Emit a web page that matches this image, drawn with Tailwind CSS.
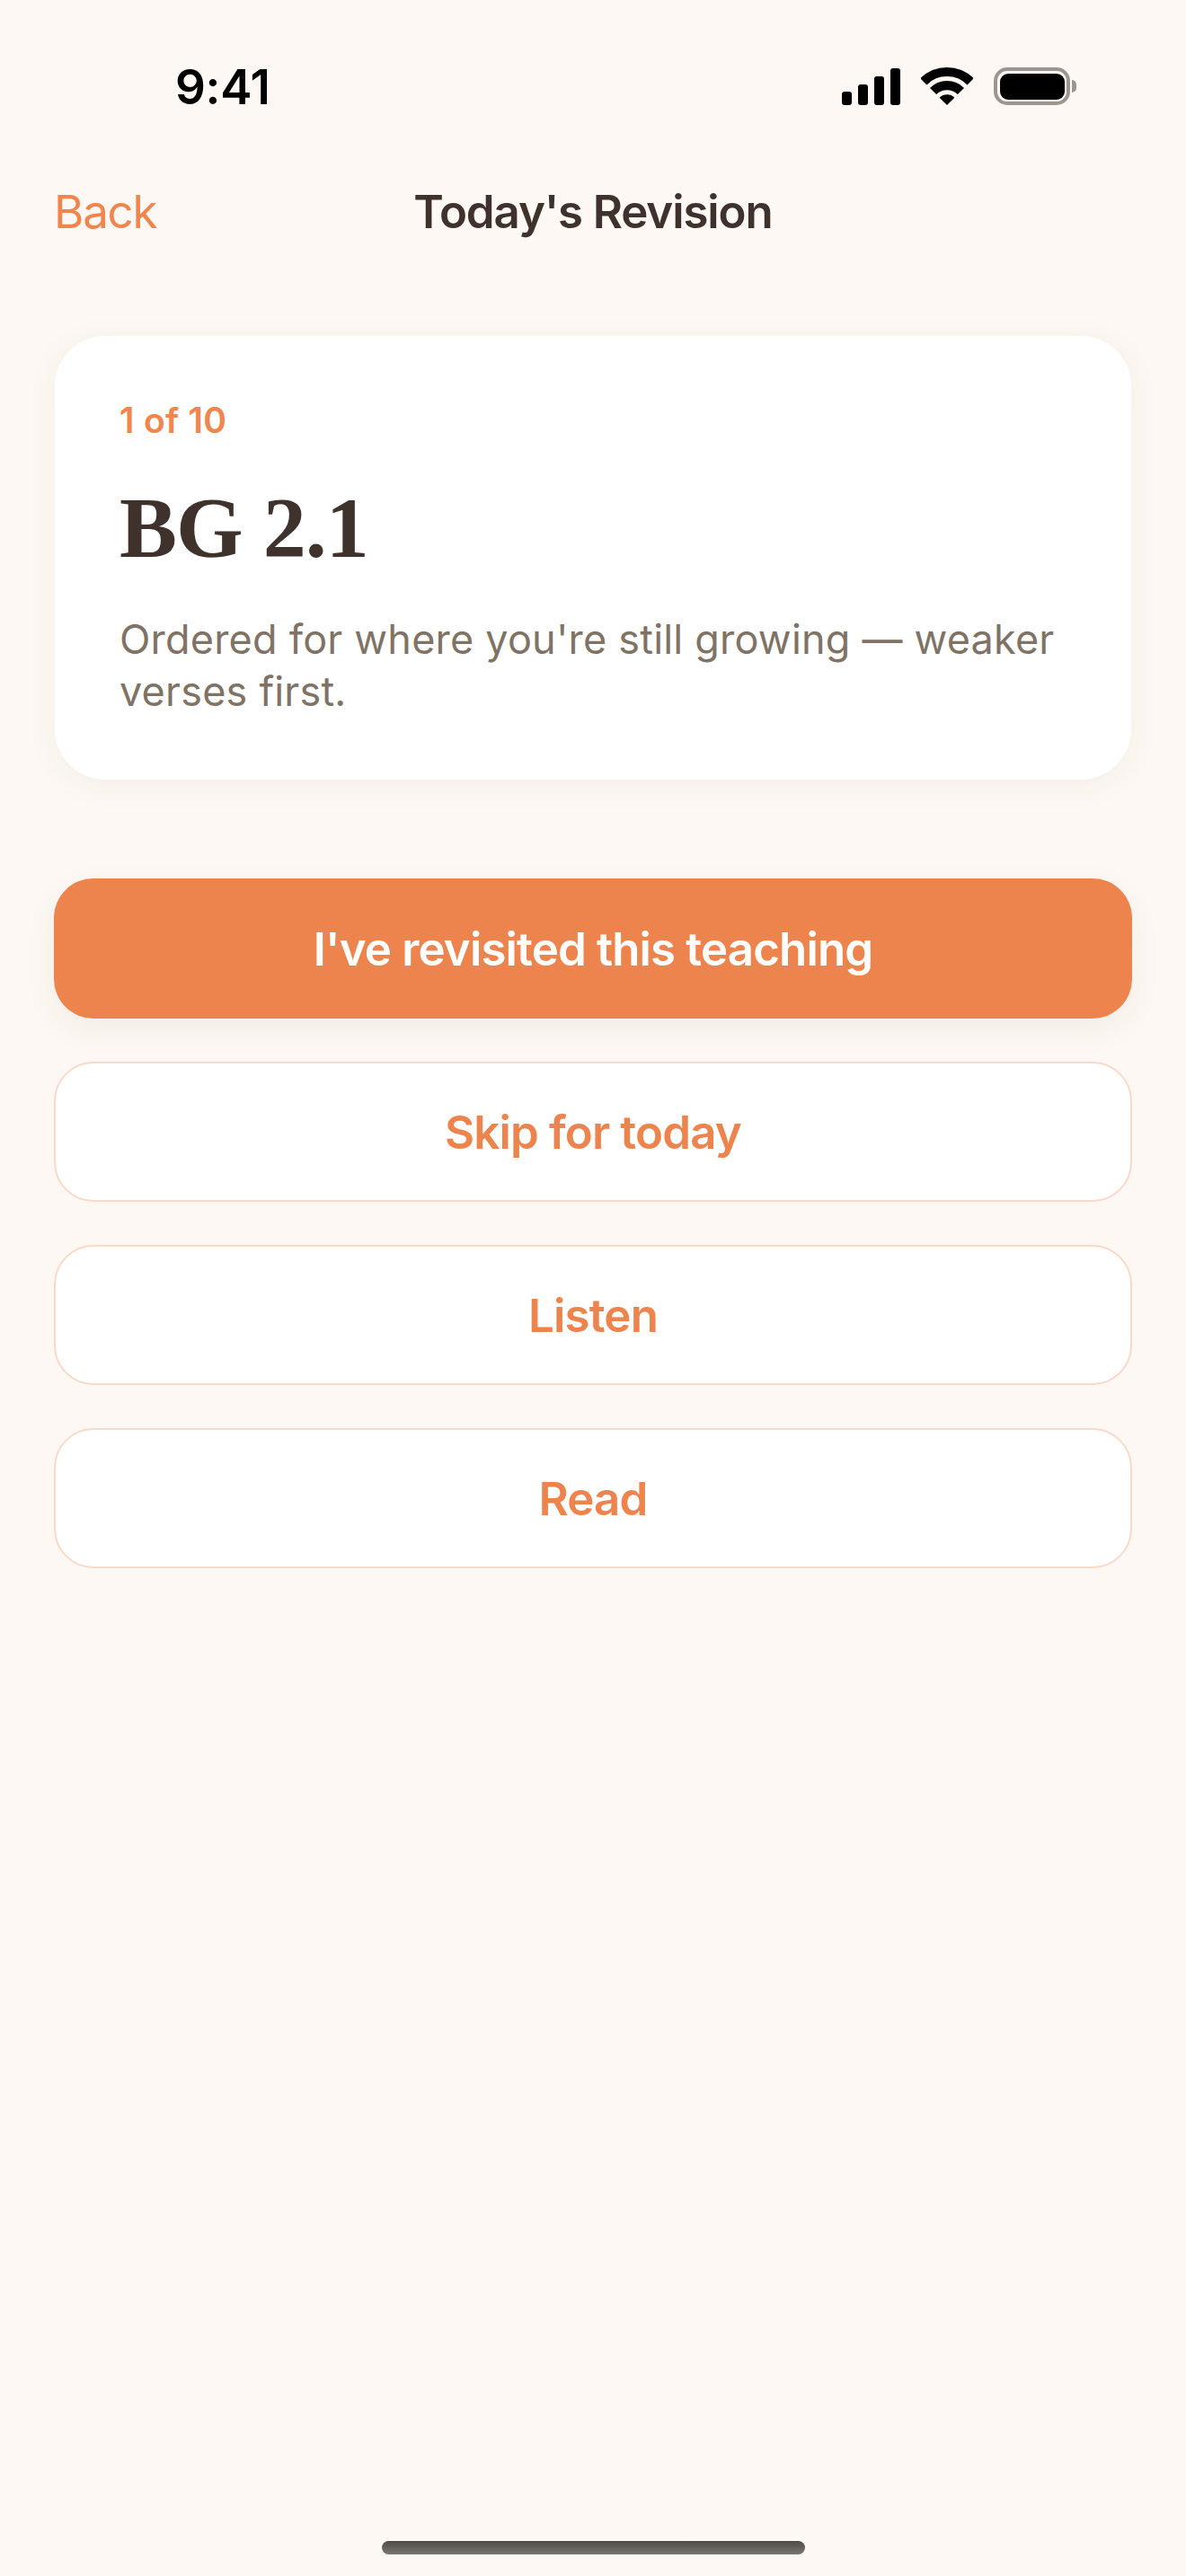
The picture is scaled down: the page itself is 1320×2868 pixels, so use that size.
<!DOCTYPE html>
<html lang="en">
<head>
<meta charset="utf-8">
<title>Today's Revision</title>
<script src="https://cdn.jsdelivr.net/npm/@tailwindcss/browser@4"></script>
</head>
<body class="m-0">
<div class="w-[1320px] h-[2868px] bg-[#fdf8f3] flex flex-col font-['Inter','Liberation_Sans',sans-serif] overflow-hidden">
  <!-- status bar -->
  <div class="h-[200px] flex items-start justify-between shrink-0">
    <div class="ml-[195px] mt-[65px] text-[53px] leading-[64px] font-semibold text-black tracking-[-0.3px]">9:41</div>
    <div class="mr-[122px] mt-[75px] flex items-start">
      <div class="flex items-end gap-[7px] h-[41px] mt-[1px]">
        <div class="w-[11px] h-[15px] bg-black rounded-[3px]"></div>
        <div class="w-[11px] h-[23px] bg-black rounded-[3px]"></div>
        <div class="w-[11px] h-[32px] bg-black rounded-[3px]"></div>
        <div class="w-[11px] h-[41px] bg-black rounded-[3px]"></div>
      </div>
      <svg class="ml-[23px]" width="58" height="42" viewBox="0 0 57.3 41.7" fill="none">
        <path d="M2.7 15.75A36.7 36.7 0 0 1 54.6 15.75" stroke="#000" stroke-width="10"/>
        <path d="M13.31 26.36A21.7 21.7 0 0 1 43.99 26.36" stroke="#000" stroke-width="10"/>
        <path d="M28.65 41.7L20.38 33.43A11.7 11.7 0 0 1 36.92 33.43Z" fill="#000"/>
      </svg>
      <div class="ml-[23px] w-[85px] h-[42px] rounded-[15px] border-[4px] border-[#9b968f] p-[2.5px]">
        <div class="w-full h-full rounded-[9px] bg-black"></div>
      </div>
      <div class="ml-[2px] mt-[14px] w-[5px] h-[14px] bg-[#9b968f] rounded-r-[5px]"></div>
    </div>
  </div>
  <!-- nav -->
  <div class="grid grid-cols-[1fr_auto_1fr] items-center px-[60px] h-[72px] shrink-0">
    <div class="text-[51px] leading-[72px] text-[#f0854d] font-[380] tracking-[-1.2px]">Back</div>
    <div class="text-[51px] leading-[72px] text-[#3f322c] font-[560] text-center whitespace-nowrap tracking-[-1.1px]">Today's Revision</div>
    <div></div>
  </div>
  <!-- content -->
  <div class="px-[60px] pt-[102px] flex flex-col">
    <div class="mx-[1px] h-[494px] bg-white rounded-[56px] shadow-[0_6px_36px_rgba(70,50,30,0.05)] px-[72px] pt-[70px]">
      <div class="text-[39px] leading-[48px] font-[560] text-[#f0854d] tracking-[0.3px]">1 of 10</div>
      <div class="mt-[40px] text-[96px] leading-[112px] font-bold text-[#3f322c] font-['Liberation_Serif',serif] tracking-[-1px]">BG 2.1</div>
      <div class="mt-[39px] text-[45px] leading-[58px] text-[#7f7366] font-[380] tracking-[0.2px]">Ordered for where you're still growing — weaker verses first.</div>
    </div>
    <div class="mt-[110px] flex flex-col gap-[48px]">
      <div class="h-[156px] pt-[2px] rounded-[44px] bg-[#ee844d] shadow-[0_12px_36px_rgba(70,50,30,0.06)] flex items-center justify-center text-[51px] font-[560] text-white tracking-[-0.85px]">I've revisited this teaching</div>
      <div class="h-[156px] pt-[2px] rounded-[44px] bg-white border-2 border-[#fbd9c8] flex items-center justify-center text-[51px] font-[560] text-[#ee844d] tracking-[-0.85px]">Skip for today</div>
      <div class="h-[156px] pt-[2px] rounded-[44px] bg-white border-2 border-[#fbd9c8] flex items-center justify-center text-[51px] font-[560] text-[#ee844d] tracking-[-0.85px]">Listen</div>
      <div class="h-[156px] pt-[2px] rounded-[44px] bg-white border-2 border-[#fbd9c8] flex items-center justify-center text-[51px] font-[560] text-[#ee844d] tracking-[-0.85px]">Read</div>
    </div>
  </div>
  <!-- home indicator -->
  <div class="mt-auto mb-[24px] mx-auto w-[471px] h-[15px] rounded-full bg-gradient-to-b from-[#4f4b47] to-[#7a7771]"></div>
</div>
</body>
</html>
